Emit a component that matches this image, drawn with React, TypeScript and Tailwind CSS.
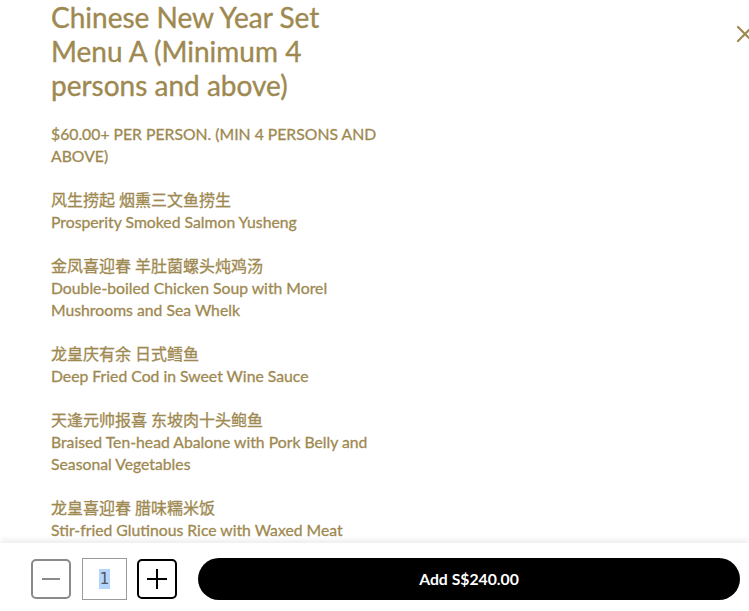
import React from "react";

const items: { zh: string; en: string }[] = [
  { zh: "风生捞起 烟熏三文鱼捞生", en: "Prosperity Smoked Salmon Yusheng" },
  { zh: "金凤喜迎春 羊肚菌螺头炖鸡汤", en: "Double-boiled Chicken Soup with Morel Mushrooms and Sea Whelk" },
  { zh: "龙皇庆有余 日式鳕鱼", en: "Deep Fried Cod in Sweet Wine Sauce" },
  { zh: "天逢元帅报喜 东坡肉十头鲍鱼", en: "Braised Ten-head Abalone with Pork Belly and Seasonal Vegetables" },
  { zh: "龙皇喜迎春 腊味糯米饭", en: "Stir-fried Glutinous Rice with Waxed Meat" },
  { zh: "金玉满堂 杨枝甘露", en: "Chilled Mango Sago with Pomelo" },
];

export default function App() {
  return (
    <div
      className="relative flex h-[611px] w-[749px] flex-col overflow-hidden bg-white text-[#9e8950]"
      style={{ fontFamily: 'Lato, "Noto Sans CJK SC", sans-serif' }}
    >
      <div className="flex-1 overflow-hidden pl-[51px]">
        <div className="w-[335px]">
          <h1 className="mb-[21px] text-[28px] font-normal leading-[34px] [-webkit-text-stroke:0.35px_#9e8950]">
            Chinese New Year Set Menu A (Minimum 4 persons and above)
          </h1>
          <p className="mb-[22px] text-[15.75px] font-normal leading-[22px] [-webkit-text-stroke:0.3px_#9e8950]">
            $60.00+ PER PERSON. (MIN 4 PERSONS AND ABOVE)
          </p>
          {items.map((it) => (
            <p key={it.zh} className="mb-[22px] text-[15.75px] font-normal leading-[22px] [-webkit-text-stroke:0.3px_#9e8950]">
              <span className="text-[16px]">{it.zh}</span>
              <br />
              {it.en}
            </p>
          ))}
        </div>
      </div>

      <button className="absolute left-[736px] top-[25px] text-[#9e8950]" aria-label="close">
        <svg width="18" height="18" viewBox="0 0 18 18" fill="none" stroke="currentColor" strokeWidth="2.2" strokeLinecap="round">
          <path d="M2 2 L16 16 M16 2 L2 16" />
        </svg>
      </button>

      <div className="relative z-10 flex h-[68px] items-center bg-white pl-[31px] pr-[9px] pt-[4px] shadow-[0_-3px_6px_rgba(0,0,0,0.08)]">
        <button className="flex h-[40px] w-[40px] items-center justify-center rounded-[5px] border-2 border-[#8a8a8a] bg-white">
          <svg width="20" height="20" viewBox="0 0 20 20" stroke="#8a8a8a" strokeWidth="2">
            <path d="M1 10 H19" />
          </svg>
        </button>
        <div
          className="ml-[11px] flex h-[42px] w-[45px] items-center justify-center border border-[#9a9a9a] bg-white text-[15px] leading-[20px] text-[#555]"
          style={{ fontFamily: '"DejaVu Sans", sans-serif' }}
        >
          <span className="bg-[#b4d5fe] px-[1px]">1</span>
        </div>
        <button className="ml-[10px] flex h-[40px] w-[40px] items-center justify-center rounded-[5px] border-2 border-black bg-white">
          <svg width="22" height="22" viewBox="0 0 22 22" stroke="#000" strokeWidth="2">
            <path d="M1 11 H21 M11 1 V21" />
          </svg>
        </button>
        <button className="ml-[21px] flex h-[42px] flex-1 items-center justify-center rounded-full bg-black text-[15.75px] font-bold text-white">
          Add S$240.00
        </button>
      </div>
    </div>
  );
}
